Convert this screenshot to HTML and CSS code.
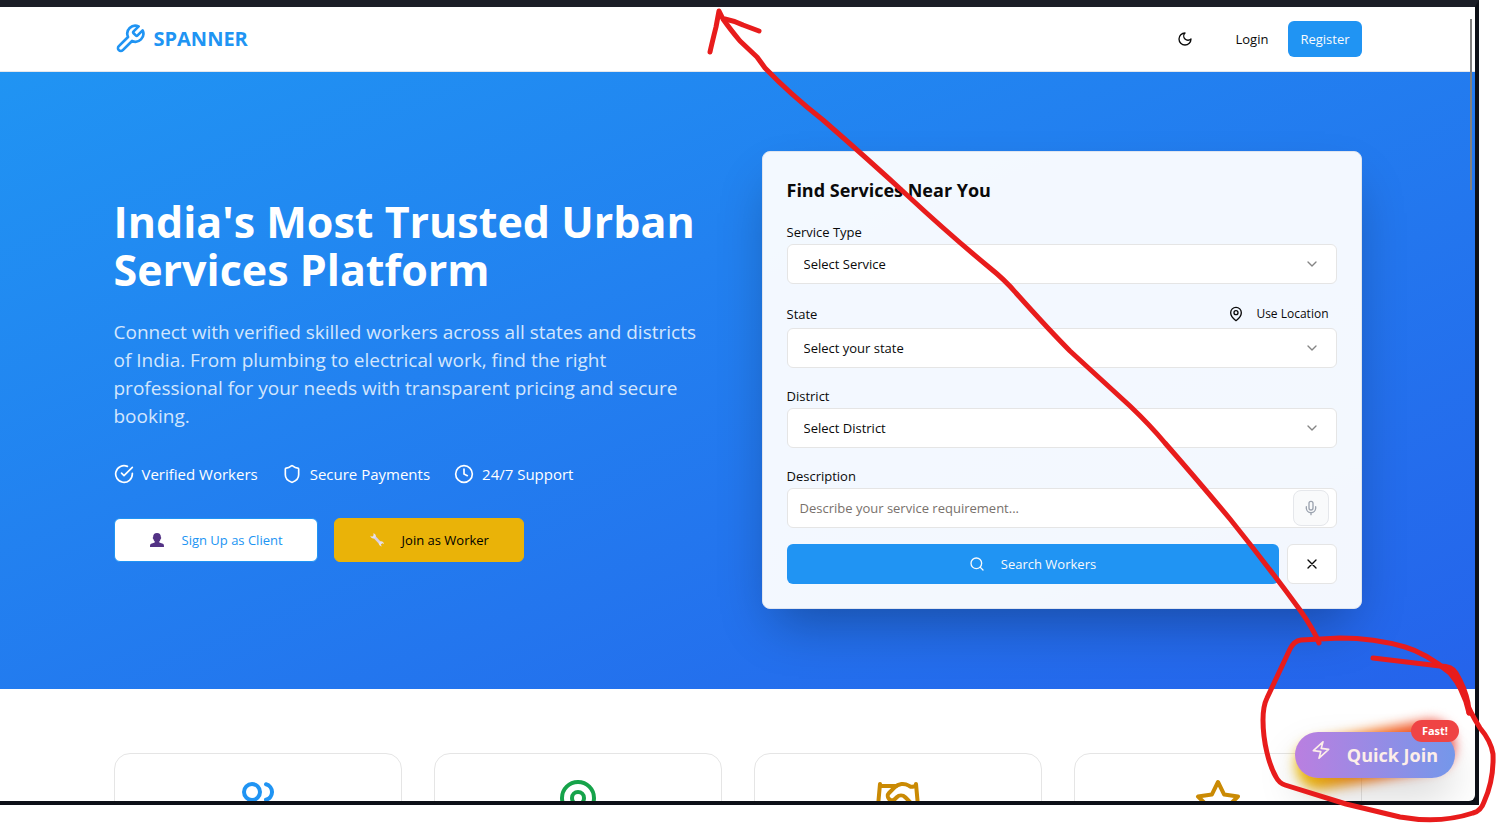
FILE: index.html
```html
<!DOCTYPE html>
<html lang="en">
<head>
<meta charset="utf-8">
<meta name="viewport" content="width=device-width, initial-scale=1">
<title>Spanner</title>
<link rel="stylesheet" href="styles.css">
</head>
<body>
<div class="window">
  <div class="page">
    <header class="header">
      <div class="container header-row">
        <a class="brand" href="#">
          <svg class="icon icon-32" viewBox="0 0 24 24"><path d="M14.7 6.3a1 1 0 0 0 0 1.4l1.6 1.6a1 1 0 0 0 1.4 0l3.77-3.77a6 6 0 0 1-7.94 7.94l-6.91 6.91a2.12 2.12 0 0 1-3-3l6.91-6.91a6 6 0 0 1 7.94-7.94l-3.76 3.76z"/></svg>
          <span>SPANNER</span>
        </a>
        <nav class="nav">
          <button class="theme-toggle" type="button" aria-label="Toggle theme">
            <svg class="icon icon-16" viewBox="0 0 24 24"><path d="M12 3a6 6 0 0 0 9 9 9 9 0 1 1-9-9Z"/></svg>
          </button>
          <a class="nav-link" href="#">Login</a>
          <a class="nav-link nav-primary" href="#">Register</a>
        </nav>
      </div>
    </header>

    <section class="hero">
      <div class="container hero-grid">
        <div class="intro">
          <h1>India's Most Trusted Urban Services Platform</h1>
          <p>Connect with verified skilled workers across all states and districts of India. From plumbing to electrical work, find the right professional for your needs with transparent pricing and secure booking.</p>
          <ul class="features">
            <li><svg class="icon icon-20" viewBox="0 0 24 24"><path d="M22 11.08V12a10 10 0 1 1-5.93-9.14"/><path d="m9 11 3 3L22 4"/></svg>Verified Workers</li>
            <li><svg class="icon icon-20" viewBox="0 0 24 24"><path d="M20 13c0 5-3.5 7.5-7.66 8.95a1 1 0 0 1-.67-.01C7.5 20.5 4 18 4 13V6a1 1 0 0 1 1-1c2 0 4.5-1.2 6.24-2.72a1.17 1.17 0 0 1 1.52 0C14.51 3.81 17 5 19 5a1 1 0 0 1 1 1z"/></svg>Secure Payments</li>
            <li><svg class="icon icon-20" viewBox="0 0 24 24"><circle cx="12" cy="12" r="10"/><path d="M12 6v6l4 2"/></svg>24/7 Support</li>
          </ul>
          <div class="actions">
            <button class="action action-client" type="button">
              <svg class="emoji" viewBox="0 0 16 16"><path fill="#533285" d="M8 1c2.500 0 4 1.500 3.900 4.200.6.300.3 1.500-.3 1.800-.2 1.200-.8 1.900-1.300 2.300v1.200l3.600 1.300c.8.400 1.100 1.100 1.100 3.200H1c0-2.100.3-2.800 1.100-3.200l3.600-1.300V9.300C5.200 8.900 4.600 8.200 4.400 7c-.6-.3-.9-1.500-.3-1.800C4 2.500 5.500 1 8 1z"/></svg>
              Sign Up as Client
            </button>
            <button class="action action-worker" type="button">
              <svg class="emoji" viewBox="0 0 16 16"><path d="M5 4.500l7 7.500" stroke="#d9d0e4" stroke-width="2.600"/><path fill="#e5dfe9" d="M4.300 1.300c1.800.3 2.900 1.900 2.500 3.500L5.200 6.400C3.400 6.900 1.600 5.700 1.300 3.800l1.900.9 1.400-1.500zM9.800 11l1.700-1.700c1.900-.3 3.300.9 3.500 2.700l-1.800-.8-1.300 1.300.9 1.900c-1.900-.2-3.200-1.600-3-3.400z"/></svg>
              Join as Worker
            </button>
          </div>
        </div>

        <form class="search-card">
          <h2>Find Services Near You</h2>
          <div class="field">
            <div class="label-row"><label for="service">Service Type</label></div>
            <div class="control">
              <select id="service"><option>Select Service</option></select>
              <svg class="icon icon-16 chevron" viewBox="0 0 24 24"><path d="m6 9 6 6 6-6"/></svg>
            </div>
          </div>
          <div class="field">
            <div class="label-row label-row-tall">
              <label for="state">State</label>
              <button class="locate" type="button">
                <svg class="icon icon-16" viewBox="0 0 24 24"><path d="M20 10c0 6-8 12-8 12s-8-6-8-12a8 8 0 0 1 16 0Z"/><circle cx="12" cy="10" r="3"/></svg>
                Use Location
              </button>
            </div>
            <div class="control">
              <select id="state"><option>Select your state</option></select>
              <svg class="icon icon-16 chevron" viewBox="0 0 24 24"><path d="m6 9 6 6 6-6"/></svg>
            </div>
          </div>
          <div class="field">
            <div class="label-row"><label for="district">District</label></div>
            <div class="control">
              <select id="district"><option>Select District</option></select>
              <svg class="icon icon-16 chevron" viewBox="0 0 24 24"><path d="m6 9 6 6 6-6"/></svg>
            </div>
          </div>
          <div class="field">
            <div class="label-row"><label for="description">Description</label></div>
            <div class="control">
              <input id="description" type="text" placeholder="Describe your service requirement...">
              <button class="mic" type="button" aria-label="Speak">
                <svg class="icon icon-16" viewBox="0 0 24 24"><path d="M12 2a3 3 0 0 0-3 3v7a3 3 0 0 0 6 0V5a3 3 0 0 0-3-3Z"/><path d="M19 10v2a7 7 0 0 1-14 0v-2"/><path d="M12 19v3"/></svg>
              </button>
            </div>
          </div>
          <div class="submit-row">
            <button class="submit" type="submit">
              <svg class="icon icon-16" viewBox="0 0 24 24"><circle cx="11" cy="11" r="8"/><path d="m21 21-4.300-4.300"/></svg>
              Search Workers
            </button>
            <button class="clear" type="reset" aria-label="Clear">
              <svg class="icon icon-16" viewBox="0 0 24 24"><path d="M18 6 6 18M6 6l12 12"/></svg>
            </button>
          </div>
        </form>
      </div>
    </section>

    <section class="stats">
      <div class="container stats-grid">
        <article class="stat stat-blue"><svg class="icon icon-48" viewBox="0 0 24 24"><path d="M16 21v-2a4 4 0 0 0-4-4H6a4 4 0 0 0-4 4v2"/><circle cx="9" cy="7" r="4"/><path d="M22 21v-2a4 4 0 0 0-3-3.870"/><path d="M16 3.130a4 4 0 0 1 0 7.750"/></svg></article>
        <article class="stat stat-green"><svg class="icon icon-48" viewBox="0 0 24 24"><path d="M20 10c0 6-8 12-8 12s-8-6-8-12a8 8 0 0 1 16 0Z"/><circle cx="12" cy="10" r="3"/></svg></article>
        <article class="stat stat-amber"><svg class="icon icon-48" viewBox="0 0 24 24"><path d="m11 17 2 2a1 1 0 1 0 3-3"/><path d="m14 14 2.500 2.500a1 1 0 1 0 3-3l-3.880-3.880a3 3 0 0 0-4.240 0l-.88.88a1 1 0 1 1-3-3l2.810-2.810a5.790 5.790 0 0 1 7.060-.87l.47.28a2 2 0 0 0 1.420.25L21 4"/><path d="m21 3 1 11h-2"/><path d="M3 3 2 14l6.500 6.500a1 1 0 1 0 3-3"/><path d="M3 4h8"/></svg></article>
        <article class="stat stat-amber"><svg class="icon icon-48" viewBox="0 0 24 24"><path d="m12 2 3.090 6.260L22 9.270l-5 4.870 1.180 6.880L12 17.770l-6.180 3.250L7 14.140 2 9.270l6.910-1.010z"/></svg></article>
      </div>
    </section>
  </div>

  <div class="quick">
    <div class="quick-glow"></div>
    <button class="quick-button" type="button">
      <svg class="icon icon-20 zap" viewBox="0 0 24 24"><path d="M13 2 3 14h9l-1 8 10-12h-9z"/></svg>
      Quick Join
    </button>
    <span class="quick-badge">Fast!</span>
  </div>
  <div class="scroll-thumb"></div>
</div>

<svg class="ink" viewBox="0 0 1497 826" aria-hidden="true">
  <path d="M710 52C712 43 714 35 716 27L719 11L723 19Q730 29 740 41L757 57L765 68Q790 94 823 120Q870 161 908 196Q950 235 990 268Q1005 280 1016 293Q1050 331 1070 351Q1095 374 1130 406Q1150 425 1165 443Q1200 483 1230 519Q1267 565 1300 610Q1314 630 1319 643"/>
  <path d="M725 19Q735 21 743 25L759 31"/>
  <path d="M1373 658L1440 666Q1452 666 1456 673Q1465 688 1468 703L1469 713"/>
  <path d="M1469 713Q1464 689 1450 673Q1426 653 1405 647Q1374 638 1340 638L1301 640Q1294 641 1290 649L1267 698Q1263 706 1263 720C1263 742 1269 765 1276 777Q1279 783 1285 785L1346 804L1400 817Q1440 824 1473 813Q1481 811 1484 802Q1494 780 1493 754Q1491 741 1480 728Q1470 712 1464 697L1455 676"/>
</svg>
</body>
</html>
```
FILE: styles.css
```css
* {
  box-sizing: border-box;
}

body {
  margin: 0;
  height: 100vh;
  padding: 0 18px 21px 0;
  position: relative;
  overflow: hidden;
  background: #fff;
  color: #0a0a0a;
  font-family: "Open Sans", "Noto Sans", sans-serif;
  font-size: 13px;
  line-height: 20px;
}

h1,
h2,
p,
ul {
  margin: 0;
  padding: 0;
}

button,
input,
select {
  font: inherit;
  color: inherit;
}

button {
  cursor: pointer;
}

a {
  color: inherit;
  text-decoration: none;
}

.window {
  position: relative;
  height: 100%;
  overflow: hidden;
  background: #0d1017;
  border-style: solid;
  border-width: 7px 4px 4px 0;
  border-color: #1b1e27 #0d1017 #0d1017;
}

.page {
  height: 100%;
  overflow: hidden;
  background: #fff;
  border-bottom-right-radius: 6px;
}

.container {
  max-width: 1280px;
  margin: 0 auto;
  padding: 0 16px;
}

.icon {
  flex: none;
  display: block;
  fill: none;
  stroke: currentColor;
  stroke-width: 2;
  stroke-linecap: round;
  stroke-linejoin: round;
}

.icon-16 {
  width: 16px;
  height: 16px;
}

.icon-20 {
  width: 20px;
  height: 20px;
}

.icon-32 {
  width: 32px;
  height: 32px;
}

.icon-48 {
  width: 48px;
  height: 48px;
}

.header {
  border-bottom: 1px solid #e5e7eb;
}

.header-row {
  display: flex;
  align-items: center;
  justify-content: space-between;
  height: 64px;
}

.brand {
  display: flex;
  align-items: center;
  gap: 8px;
  color: #2094f3;
  font-size: 20px;
  font-weight: 700;
}

.nav {
  display: flex;
  align-items: center;
  gap: 8px;
}

.theme-toggle {
  display: grid;
  place-items: center;
  width: 36px;
  height: 36px;
  margin-right: 12px;
  padding: 0;
  border: 0;
  background: none;
}

.nav-link {
  display: flex;
  align-items: center;
  height: 36px;
  padding: 0 12px;
  border-radius: 6px;
}

.nav-primary {
  background: #2094f3;
  color: #f8fafc;
}

.hero {
  padding: 79px 0 80px;
  background: linear-gradient(to bottom right, #2094f3, #2563eb);
}

.hero-grid {
  display: grid;
  grid-template-columns: 1fr 1fr;
  align-items: center;
  gap: 48px;
}

.intro {
  color: #fff;
}

.intro h1 {
  margin-bottom: 24px;
  font-size: 43px;
  font-weight: 700;
  line-height: 48px;
}

.intro p {
  margin-bottom: 32px;
  color: #d3e6fd;
  font-size: 19px;
  line-height: 28px;
}

.features {
  display: flex;
  flex-wrap: wrap;
  gap: 24px;
  margin-bottom: 32px;
  list-style: none;
  font-size: 15px;
  line-height: 24px;
}

.features li {
  display: flex;
  align-items: center;
  gap: 8px;
}

.actions {
  display: flex;
  gap: 16px;
}

.action {
  display: flex;
  align-items: center;
  gap: 17px;
  height: 44px;
  padding: 0 34px;
  border: 1px solid #2094f3;
  border-radius: 6px;
}

.emoji {
  flex: none;
  width: 16px;
  height: 16px;
}

.action-client {
  background: #fff;
  color: #2094f3;
}

.action-worker {
  border-color: #eab308;
  background: #eab308;
  color: #000;
}

.search-card {
  display: flex;
  flex-direction: column;
  gap: 16px;
  padding: 24px;
  border: 1px solid #dfe5ef;
  border-radius: 8px;
  background: rgba(255, 255, 255, 0.95);
  box-shadow: 0 25px 50px -12px rgba(0, 0, 0, 0.3);
}

.search-card h2 {
  font-size: 18px;
  font-weight: 700;
  line-height: 28px;
}

.label-row {
  display: flex;
  align-items: center;
  justify-content: space-between;
  height: 24px;
}

.label-row-tall {
  height: 28px;
}

.locate {
  display: flex;
  align-items: center;
  gap: 12px;
  padding: 0 8px;
  border: 0;
  background: none;
  font-size: 12px;
}

.control {
  position: relative;
}

.control select,
.control input {
  display: block;
  width: 100%;
  height: 40px;
  border: 1px solid #e5e5e5;
  border-radius: 6px;
  background: #fff;
  appearance: none;
}

.control select {
  padding: 0 40px 0 16px;
}

.control input {
  padding: 0 48px 0 12px;
}

.control input::placeholder {
  color: #78716c;
}

.chevron {
  position: absolute;
  top: 12px;
  right: 17px;
  color: #858585;
  pointer-events: none;
}

.mic {
  position: absolute;
  top: 2px;
  right: 8px;
  display: grid;
  place-items: center;
  width: 36px;
  height: 36px;
  padding: 0;
  border: 1px solid #e5e7eb;
  border-radius: 8px;
  background: #f9fafb;
  color: #9ca3af;
}

.submit-row {
  display: flex;
  gap: 8px;
}

.submit,
.clear {
  display: flex;
  align-items: center;
  justify-content: center;
  gap: 16px;
  height: 40px;
  border-radius: 6px;
}

.submit {
  flex: 1;
  border: 0;
  background: #2094f3;
  color: #f8fafc;
}

.clear {
  width: 50px;
  padding: 0;
  border: 1px solid #e5e5e5;
  background: #fff;
}

.stats {
  padding: 64px 0;
}

.stats-grid {
  display: grid;
  grid-template-columns: repeat(4, 1fr);
  gap: 32px;
}

.stat {
  display: flex;
  justify-content: center;
  min-height: 160px;
  padding: 24px;
  border: 1px solid #e5e5e5;
  border-radius: 16px;
}

.stat-blue {
  color: #2094f3;
}

.stat-green {
  color: #16a34a;
}

.stat-amber {
  color: #ca8a04;
}

.quick {
  position: absolute;
  right: 20px;
  bottom: 23px;
}

.quick-glow {
  position: absolute;
  inset: -2px 0;
  border-radius: 23px;
  background: linear-gradient(to right, #facc15, #f97316, #ef4444);
  filter: blur(6px);
  transform: rotate(-10deg);
}

.quick-button {
  position: relative;
  display: flex;
  align-items: center;
  gap: 16px;
  height: 46px;
  padding: 0 17px 0 16px;
  border: 0;
  border-radius: 23px;
  background: linear-gradient(to right, #ba7fe0, #7497ea);
  box-shadow: 0 20px 40px rgba(0, 0, 0, 0.15);
  color: #fdeee9;
  font-size: 18px;
  font-weight: 700;
}

.zap {
  margin-bottom: 10px;
  transform: rotate(8deg);
}

.quick-badge {
  position: absolute;
  top: -12px;
  right: -4px;
  padding: 0 11px;
  border-radius: 11px;
  background: #ef4444;
  color: #fff;
  font-size: 11px;
  font-weight: 700;
  line-height: 22px;
}

.scroll-thumb {
  position: absolute;
  top: 12px;
  right: 3px;
  width: 2px;
  height: 171px;
  background: #808080;
}

.ink {
  position: absolute;
  inset: 0;
  width: 100%;
  height: 100%;
  fill: none;
  stroke: #e81c1c;
  stroke-width: 5;
  stroke-linecap: round;
  stroke-linejoin: round;
  pointer-events: none;
}
```
